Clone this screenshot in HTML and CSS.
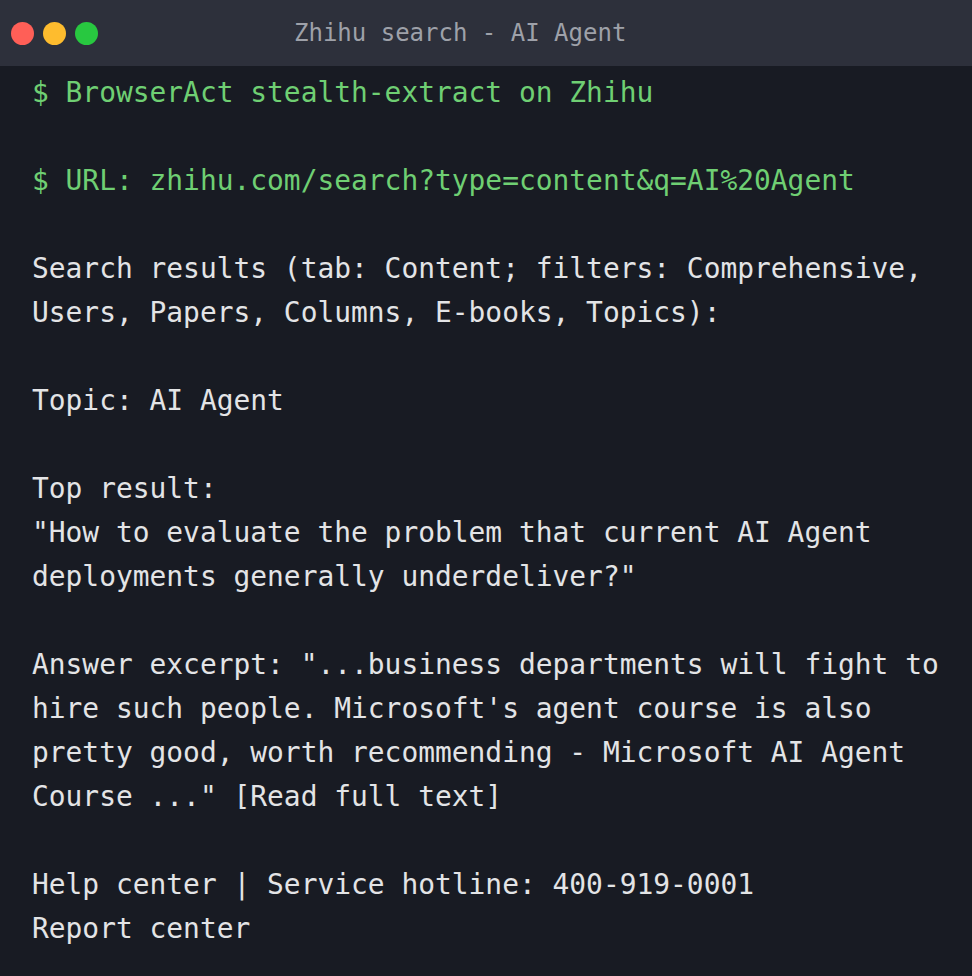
FILE: index.html
```html
<!DOCTYPE html>
<html>
<head>
<meta charset="utf-8">
<link rel="stylesheet" href="styles.css">
</head>
<body>
<div class="window">
  <div class="titlebar">
    <div class="dots">
      <span class="dot red"></span>
      <span class="dot yellow"></span>
      <span class="dot green"></span>
    </div>
    <div class="title">Zhihu search - AI Agent</div>
  </div>
  <div class="term">
<div class="line cmd">$ BrowserAct stealth-extract on Zhihu</div>
<div class="line blank"></div>
<div class="line cmd">$ URL: zhihu.com/search?type=content&amp;q=AI%20Agent</div>
<div class="line blank"></div>
<div class="line">Search results (tab: Content; filters: Comprehensive,</div>
<div class="line">Users, Papers, Columns, E-books, Topics):</div>
<div class="line blank"></div>
<div class="line">Topic: AI Agent</div>
<div class="line blank"></div>
<div class="line">Top result:</div>
<div class="line">"How to evaluate the problem that current AI Agent</div>
<div class="line">deployments generally underdeliver?"</div>
<div class="line blank"></div>
<div class="line">Answer excerpt: "...business departments will fight to</div>
<div class="line">hire such people. Microsoft's agent course is also</div>
<div class="line">pretty good, worth recommending - Microsoft AI Agent</div>
<div class="line">Course ..." [Read full text]</div>
<div class="line blank"></div>
<div class="line">Help center | Service hotline: 400-919-0001</div>
<div class="line">Report center</div>
  </div>
</div>
</body>
</html>
```
FILE: styles.css
```css
html, body {
  margin: 0;
  padding: 0;
  background: #181b23;
}
.window {
  width: 972px;
  height: 976px;
  background: #181b23;
  overflow: hidden;
}
.titlebar {
  height: 66px;
  background: #2d303b;
  display: flex;
  align-items: center;
}
.dots {
  display: flex;
  gap: 9px;
  padding-left: 11px;
}
.dot {
  width: 23px;
  height: 23px;
  border-radius: 50%;
  display: block;
}
.red { background: #ff5f57; }
.yellow { background: #febc2e; }
.green { background: #28c840; }
.title {
  margin-left: 196px;
  font-family: "DejaVu Sans Mono", monospace;
  font-size: 24px;
  color: #9ea1a9;
}
.term {
  padding: 5px 0 0 32px;
  font-family: "DejaVu Sans Mono", monospace;
  font-size: 27.9px;
  line-height: 44px;
  color: #e3e4e6;
}
.line {
  height: 44px;
  white-space: pre;
}
.cmd {
  color: #6fcf73;
}
```
